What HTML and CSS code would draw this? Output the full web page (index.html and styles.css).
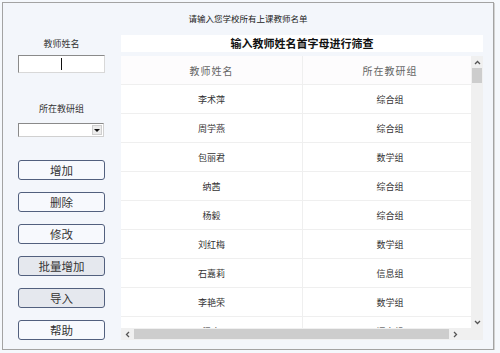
FILE: index.html
```html
<!DOCTYPE html>
<html lang="zh-CN">
<head>
  <meta charset="UTF-8" />
  <title>教师名单</title>
  <link rel="stylesheet" href="styles.css">
</head>
<body>
  <div class="window">
    <div class="title">请输入您学校所有上课教师名单</div>

    <div class="main">
      <!-- 左侧表单 -->
      <div class="side">
        <div class="label">教师姓名</div>
        <div class="input"><span class="caret"></span></div>

        <div class="label label-group">所在教研组</div>
        <div class="select">
          <span class="select-btn">
            <svg width="6" height="3" viewBox="0 0 6 3"><path d="M0 0h6L3 3z" fill="#111"/></svg>
          </span>
        </div>

        <div class="buttons">
          <button class="btn">增加</button>
          <button class="btn">删除</button>
          <button class="btn">修改</button>
          <button class="btn gray">批量增加</button>
          <button class="btn gray">导入</button>
          <button class="btn">帮助</button>
        </div>
      </div>

      <!-- 教师列表 -->
      <div class="list">
        <div class="filter">输入教师姓名首字母进行筛查</div>
        <div class="grid">
          <div class="viewport">
            <table>
              <thead>
                <tr><th>教师姓名</th><th>所在教研组</th></tr>
              </thead>
              <tbody>
                <tr><td>李术萍</td><td>综合组</td></tr>
                <tr><td>周学燕</td><td>综合组</td></tr>
                <tr><td>包丽君</td><td>数学组</td></tr>
                <tr><td>纳茜</td><td>综合组</td></tr>
                <tr><td>杨毅</td><td>综合组</td></tr>
                <tr><td>刘红梅</td><td>数学组</td></tr>
                <tr><td>石嘉莉</td><td>信息组</td></tr>
                <tr><td>李艳荣</td><td>数学组</td></tr>
                <tr><td>汤文</td><td>语文组</td></tr>
              </tbody>
            </table>
          </div>
          <div class="vscroll">
            <span class="arrow">
              <svg width="7" height="5" viewBox="0 0 7 5"><path d="M1 4l2.5-2.5L6 4" fill="none" stroke="#555" stroke-width="1.3"/></svg>
            </span>
            <span class="vthumb"></span>
            <span class="track"></span>
            <span class="arrow">
              <svg width="7" height="5" viewBox="0 0 7 5"><path d="M1 1l2.5 2.5L6 1" fill="none" stroke="#555" stroke-width="1.3"/></svg>
            </span>
          </div>
          <div class="hscroll">
            <span class="arrow">
              <svg width="5" height="7" viewBox="0 0 5 7"><path d="M4 1L1.5 3.5 4 6" fill="none" stroke="#555" stroke-width="1.3"/></svg>
            </span>
            <span class="hthumb"></span>
            <span class="arrow">
              <svg width="5" height="7" viewBox="0 0 5 7"><path d="M1 1l2.5 2.5L1 6" fill="none" stroke="#555" stroke-width="1.3"/></svg>
            </span>
          </div>
          <div class="corner"></div>
        </div>
      </div>
    </div>
  </div>
</body>
</html>
```

FILE: styles.css
```css
body {
  margin: 0;
  padding: 0;
  background-color: #f5f8fc;
  font-family: 'Noto Sans CJK SC', sans-serif;
  color: #333;
}

.window {
  box-sizing: border-box;
  width: 492px;
  height: 348px;
  margin: 2px 0 0 2px;
  background-color: #f3f6fb;
  border: 1px solid #a3a3a3;
  box-shadow: 1px 1px 0 #d2d2d2;
}

.title {
  height: 32px;
  padding-top: 9px;
  box-sizing: border-box;
  font-size: 8.5px;
  line-height: 12px;
  text-align: center;
  color: #222;
}

.main {
  display: flex;
}

/* 左侧 */
.side {
  width: 118px;
  padding-left: 15px;
  box-sizing: border-box;
}

.label {
  width: 87px;
  margin-top: 3px;
  font-size: 9px;
  line-height: 12px;
  text-align: center;
  color: #333;
}

.label-group {
  margin-top: 30px;
}

.input {
  box-sizing: border-box;
  width: 87px;
  height: 18px;
  margin-top: 5px;
  background-color: #fff;
  border: 1px solid #8a8a8a;
  border-right-color: #d8d8d8;
  border-bottom-color: #d8d8d8;
  display: flex;
  justify-content: center;
  align-items: center;
}

.caret {
  width: 1px;
  height: 12px;
  background-color: #111;
}

.select {
  box-sizing: border-box;
  width: 86px;
  height: 14px;
  margin-top: 8px;
  background-color: #fff;
  border: 1px solid #8a8a8a;
  border-right-color: #d0d0d0;
  border-bottom-color: #d0d0d0;
  display: flex;
  justify-content: flex-end;
}

.select-btn {
  width: 10px;
  margin: 1px;
  background-color: #ececec;
  border: 1px solid #cfcfcf;
  box-sizing: border-box;
  display: flex;
  align-items: center;
  justify-content: center;
}

.buttons {
  display: flex;
  flex-direction: column;
  gap: 12px;
  margin-top: 23px;
}

.btn {
  width: 87px;
  height: 20px;
  padding: 0;
  background-color: #f7f9fd;
  border: 1px solid #52607e;
  border-radius: 3px;
  font-family: 'Noto Sans CJK SC', sans-serif;
  font-size: 11.5px;
  font-weight: 400;
  line-height: 18px;
  color: #333;
}

.btn.gray {
  background-color: #e5e8ee;
}

/* 右侧列表 */
.list {
  width: 362px;
}

.filter {
  height: 17px;
  background-color: #fff;
  font-size: 11px;
  font-weight: bold;
  line-height: 17px;
  text-align: center;
  color: #111;
}

.grid {
  display: grid;
  grid-template-columns: 350px 12px;
  grid-template-rows: 272px 12px;
  margin-top: 4px;
  background-color: #fff;
}

.viewport {
  overflow: hidden;
}

table {
  width: 356px;
  border-collapse: collapse;
}

th, td {
  height: 28px;
  padding: 0;
  text-align: center;
  border-bottom: 1px solid #efefef;
  font-size: 9px;
  font-weight: normal;
  color: #333;
}

th {
  font-size: 10px;
  letter-spacing: 1px;
  color: #666;
  background-color: #fdfcfd;
}

th:first-child, td:first-child {
  width: 181px;
  border-right: 1px solid #efefef;
}

.vscroll {
  display: flex;
  flex-direction: column;
  align-items: center;
  background-color: #f0f0f0;
}

.vscroll .arrow {
  height: 12px;
  display: flex;
  align-items: center;
}

.vthumb {
  width: 10px;
  height: 15px;
  background-color: #cdcdcd;
}

.track {
  flex: 1;
}

.hscroll {
  display: flex;
  align-items: center;
  background-color: #f0f0f0;
}

.hscroll .arrow {
  width: 13px;
  height: 12px;
  display: flex;
  align-items: center;
  justify-content: center;
}

.hthumb {
  width: 315px;
  height: 10px;
  background-color: #cdcdcd;
}

.corner {
  background-color: #f0f0f0;
}
```
